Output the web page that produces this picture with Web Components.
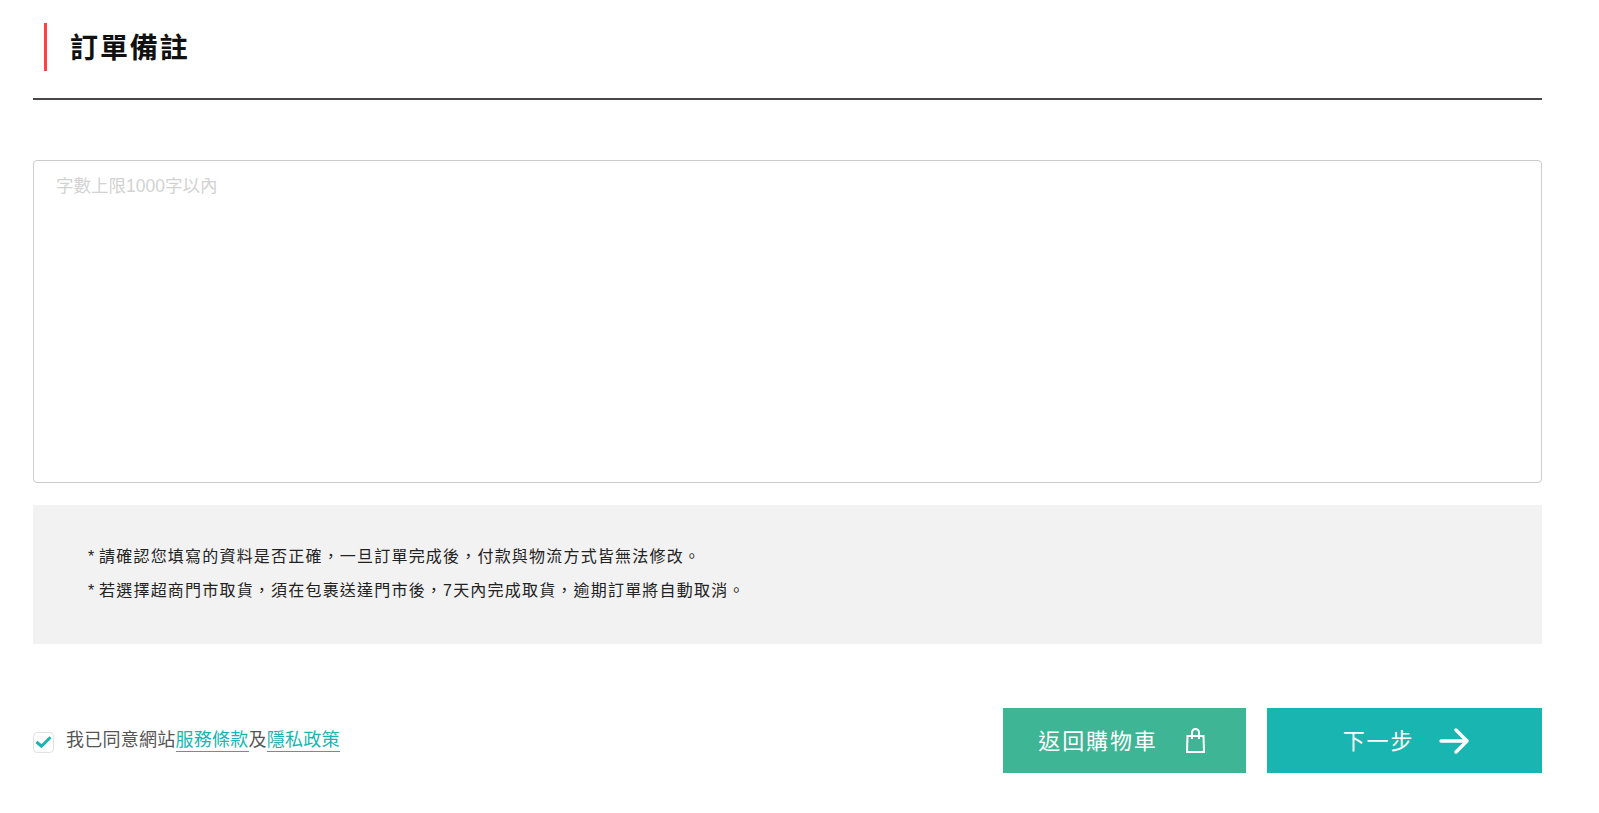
<!DOCTYPE html>
<html lang="zh-Hant"><head><meta charset="utf-8"><style>
html,body{margin:0;background:#fff;font-family:"Liberation Sans","Noto Sans CJK TC",sans-serif}
</style></head><body>
<order-page>
<section-title>訂單備註</section-title>
<note-field placeholder="字數上限1000字以內"></note-field>
<notice-box><p>* 請確認您填寫的資料是否正確&#xFF0C;一旦訂單完成後&#xFF0C;付款與物流方式皆無法修改。</p><p>* 若選擇超商門市取貨&#xFF0C;須在包裹送達門市後&#xFF0C;7天內完成取貨&#xFF0C;逾期訂單將自動取消。</p></notice-box>
<action-row>
<agree-check slot="left">我已同意網站<a>服務條款</a>及<a>隱私政策</a></agree-check>
<action-button slot="right" color="#3eb595" icon="bag" style="width:243px;--gap:27px;padding-right:5px;box-sizing:border-box">返回購物車</action-button>
<action-button slot="right" color="#19b5b1" icon="arrow" style="width:275px;--gap:25px;padding-left:3px;box-sizing:border-box">下一步</action-button>
</action-row>
</order-page>
<script>
function def(name,html,setup){customElements.define(name,class extends HTMLElement{constructor(){super();this.attachShadow({mode:'open'}).innerHTML=html;}connectedCallback(){setup&&setup(this,this.shadowRoot)}})}
def('order-page',`<style>:host{display:flex;flex-direction:column;padding:0 57px 0 33px;box-sizing:border-box;width:1599px;height:813px;overflow:hidden}</style><slot></slot>`);
def('section-title',`<style>:host{display:block;padding:23px 0 27px 11px;border-bottom:2px solid #4a4646;margin-bottom:60px}
div{border-left:3px solid #ff4040;height:48px;line-height:52px;padding-left:23px;font-size:28px;font-weight:700;letter-spacing:1.9px;color:#111}</style><div><slot></slot></div>`);
def('note-field',`<style>:host{display:block}textarea{display:block;width:100%;height:323px;box-sizing:border-box;border:1px solid #ccc;border-radius:4px;padding:14px 22px;font:17.500px/22px "Liberation Sans","Noto Sans CJK TC",sans-serif;resize:none;outline:none;background:#fff}textarea::placeholder{color:#d2d2d2;opacity:1}</style><textarea readonly></textarea>`,(h,s)=>{s.querySelector('textarea').placeholder=h.getAttribute('placeholder')});
def('notice-box',`<style>:host{display:block;margin-top:22px;background:#f2f2f2;height:139px;box-sizing:border-box;padding:35px 55px;font-size:16px;letter-spacing:1.2px;word-spacing:-2px;line-height:34px;color:#222}::slotted(p){margin:0}</style><slot></slot>`);
def('action-row',`<style>:host{display:flex;justify-content:space-between;align-items:center;margin-top:64px}.r{display:flex;gap:21px}</style><slot name="left"></slot><div class="r"><slot name="right"></slot></div>`);
def('agree-check',`<style>:host{display:flex;align-items:center;font-size:18px;letter-spacing:.25px;color:#555}
.b{width:21px;height:21px;box-sizing:border-box;border:1px solid #e2e2e2;border-radius:4px;margin-right:12px;margin-top:3px;display:flex;align-items:center;justify-content:center}
.t{line-height:24px;margin-top:-2px}
::slotted(a){color:#19b5b1;border-bottom:1px solid #19b5b1;padding-bottom:1px}</style><span class="b"><svg width="17" height="12" viewBox="0 0 17 12"><path d="M1.500 6l5 4.200 9-9" fill="none" stroke="#19b5b1" stroke-width="3"/></svg></span><span class="t"><slot></slot></span>`);
const icons={bag:`<svg width="21" height="26" viewBox="0 0 21 26" fill="none" stroke="#fff" stroke-width="2"><path d="M2.500 8h16l.5 16H2z"/><path d="M7 11V4.500a3.500 3.500 0 0 1 7 0V11"/></svg>`,arrow:`<svg width="30" height="26" viewBox="0 0 30 26" fill="none" stroke="#fff" stroke-width="3.400" stroke-linecap="round" stroke-linejoin="round"><path d="M2 13h26M17 2l11 11-11 11"/></svg>`};
def('action-button',`<style>:host{display:flex;align-items:center;justify-content:center;height:65px;font-size:22px;letter-spacing:1.9px;color:#fff;gap:var(--gap,26px)}span.l{margin-top:-4px}</style><span class="l"><slot></slot></span><span id="i" style="display:flex"></span>`,(h,s)=>{h.style.background=h.getAttribute('color');s.getElementById('i').innerHTML=icons[h.getAttribute('icon')]});
</script></body></html>
